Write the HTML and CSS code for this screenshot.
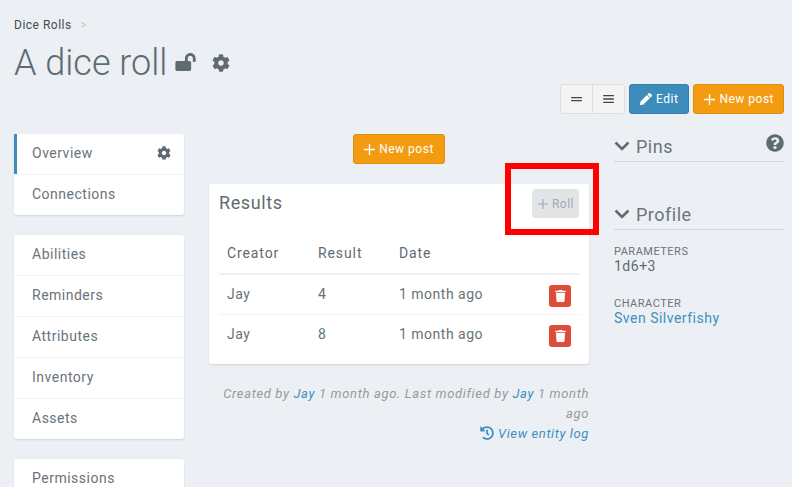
FILE: index.html
```html
<!DOCTYPE html>
<html lang="en">
<head>
    <meta charset="UTF-8">
    <title>A dice roll</title>
    <link rel="stylesheet" href="styles.css">
</head>
<body>
    <svg class="sprites" width="0" height="0">
        <symbol id="i-cog" viewBox="0 0 512 512"><path d="M487.4 315.7l-42.6-24.6c4.3-23.2 4.3-47 0-70.2l42.6-24.6c4.9-2.8 7.1-8.6 5.5-14-11.1-35.6-30-67.8-54.7-94.6-3.8-4.1-10-5.1-14.8-2.3L380.8 110c-17.9-15.4-38.5-27.3-60.8-35.1V25.8c0-5.6-3.9-10.5-9.4-11.7-36.7-8.2-74.3-7.8-109.2 0-5.5 1.2-9.4 6.1-9.4 11.7V75c-22.2 7.9-42.8 19.8-60.8 35.1L88.7 85.5c-4.9-2.8-11-1.9-14.8 2.3-24.7 26.7-43.6 58.9-54.7 94.6-1.7 5.4.6 11.2 5.5 14L67.3 221c-4.3 23.2-4.3 47 0 70.2l-42.6 24.6c-4.9 2.8-7.1 8.6-5.5 14 11.1 35.6 30 67.8 54.7 94.6 3.8 4.1 10 5.1 14.8 2.3l42.6-24.6c17.9 15.4 38.5 27.3 60.8 35.1v49.2c0 5.6 3.9 10.5 9.4 11.7 36.7 8.2 74.3 7.8 109.2 0 5.5-1.2 9.4-6.1 9.4-11.7v-49.2c22.2-7.9 42.8-19.8 60.8-35.1l42.6 24.6c4.9 2.8 11 1.9 14.8-2.3 24.7-26.7 43.6-58.9 54.7-94.6 1.5-5.5-.7-11.3-5.6-14.1zM256 336c-44.1 0-80-35.9-80-80s35.9-80 80-80 80 35.9 80 80-35.9 80-80 80z"/></symbol>
        <symbol id="i-plus" viewBox="0 0 12 12"><path d="M5.3 0h1.4v5.300H12v1.400H6.700V12H5.300V6.700H0V5.300h5.300z"/></symbol>
        <symbol id="i-chevron" viewBox="0 0 16 10"><path d="M1.5 1.5 8 8l6.5-6.5" fill="none" stroke="currentColor" stroke-width="2.6"/></symbol>
        <symbol id="i-trash" viewBox="0 0 448 512"><path d="M432 32H312l-9.4-18.7A24 24 0 0 0 281.1 0H166.8a23.72 23.72 0 0 0-21.4 13.3L136 32H16A16 16 0 0 0 0 48v32a16 16 0 0 0 16 16h416a16 16 0 0 0 16-16V48a16 16 0 0 0-16-16zM53.2 467a48 48 0 0 0 47.9 45h245.8a48 48 0 0 0 47.9-45L416 128H32z"/></symbol>
    </svg>

    <div class="breadcrumb">Dice Rolls <span class="sep">&gt;</span></div>
    <div class="title-row">
        <h1>A dice roll</h1>
        <svg class="icon-unlock" viewBox="0 0 576 512"><path d="M423.5 0C339.5.3 272 69.5 272 153.5V224H48c-26.5 0-48 21.5-48 48v192c0 26.5 21.5 48 48 48h352c26.5 0 48-21.5 48-48V272c0-26.5-21.5-48-48-48h-48v-71.1c0-39.6 31.7-72.5 71.3-72.9 40-.4 72.7 32.1 72.7 72v80c0 13.3 10.7 24 24 24h32c13.3 0 24-10.7 24-24v-80C576 68 507.5-.3 423.5 0z"/></svg>
        <svg class="icon-title-cog"><use href="#i-cog"/></svg>
    </div>

    <div class="actions">
        <div class="btn-group">
            <button class="btn btn-light"><svg class="icon-bars" viewBox="0 0 16 12"><path d="M0 3h16v2H0zM0 7.500h16v2H0z"/></svg></button>
            <button class="btn btn-light"><svg class="icon-bars" viewBox="0 0 16 12"><path d="M0 0h16v2H0zM0 5h16v2H0zM0 10h16v2H0z"/></svg></button>
        </div>
        <button class="btn btn-blue"><svg class="icon-btn icon-pencil" viewBox="0 0 512 512"><path d="M497.9 142.1l-46.1 46.1c-4.7 4.7-12.3 4.7-17 0l-111-111c-4.7-4.7-4.7-12.3 0-17l46.1-46.1c18.7-18.7 49.1-18.7 67.9 0l60.1 60.1c18.800 18.700 18.800 49.100 0 67.900zM284.200 99.800L21.600 362.400.4 483.900c-2.900 16.400 11.400 30.600 27.800 27.800l121.500-21.300 262.600-262.600c4.700-4.700 4.700-12.300 0-17l-111-111c-4.800-4.700-12.400-4.700-17.100 0z"/></svg>Edit</button>
        <button class="btn btn-orange"><svg class="icon-btn"><use href="#i-plus"/></svg>New post</button>
    </div>

    <div class="layout">
        <nav class="sidebar">
            <ul class="menu">
                <li class="active">Overview<svg class="icon-menu-cog"><use href="#i-cog"/></svg></li>
                <li>Connections</li>
            </ul>
            <ul class="menu">
                <li>Abilities</li>
                <li>Reminders</li>
                <li>Attributes</li>
                <li>Inventory</li>
                <li>Assets</li>
            </ul>
            <ul class="menu">
                <li>Permissions</li>
            </ul>
        </nav>

        <main class="content">
            <div class="content-actions">
                <button class="btn btn-orange"><svg class="icon-btn"><use href="#i-plus"/></svg>New post</button>
            </div>
            <section class="card">
                <div class="card-head">
                    <h3>Results</h3>
                    <button class="btn btn-disabled"><svg class="icon-btn"><use href="#i-plus"/></svg>Roll</button>
                </div>
                <table>
                    <thead>
                        <tr><th>Creator</th><th>Result</th><th>Date</th><th></th></tr>
                    </thead>
                    <tbody>
                        <tr><td>Jay</td><td>4</td><td>1 month ago</td><td class="cell-del"><span class="btn-del"><svg><use href="#i-trash"/></svg></span></td></tr>
                        <tr><td>Jay</td><td>8</td><td>1 month ago</td><td class="cell-del"><span class="btn-del"><svg><use href="#i-trash"/></svg></span></td></tr>
                    </tbody>
                </table>
            </section>
            <p class="meta">
                Created by <a href="#">Jay</a> 1 month ago. Last modified by <a href="#">Jay</a> 1 month ago<br>
                <a class="log-link" href="#"><svg class="icon-history" viewBox="0 0 512 512"><path d="M504 255.531c.253 136.64-111.18 248.372-247.82 248.468-59.015.042-113.223-20.53-155.822-54.911-11.077-8.94-11.905-25.541-1.839-35.607l11.267-11.267c8.609-8.609 22.353-9.551 31.891-1.984C173.062 425.135 212.781 440 256 440c101.705 0 184-82.311 184-184 0-101.705-82.311-184-184-184-48.814 0-93.149 18.969-126.068 49.932l50.754 50.754c10.08 10.08 2.941 27.314-11.313 27.314H24c-8.837 0-16-7.163-16-16V38.627c0-14.254 17.234-21.393 27.314-11.314l49.372 49.372C129.209 34.136 189.552 8 256 8c136.81 0 247.747 110.78 248 247.531zm-180.912 78.784l9.823-12.63c8.138-10.463 6.253-25.542-4.21-33.679L288 256.349V152c0-13.255-10.745-24-24-24h-16c-13.255 0-24 10.745-24 24v135.651l65.409 50.874c10.463 8.137 25.541 6.253 33.679-4.21z"/></svg>View entity log</a>
            </p>
        </main>

        <aside class="side">
            <div class="side-head">
                <svg class="icon-chevron"><use href="#i-chevron"/></svg>Pins
                <svg class="icon-help" viewBox="0 0 512 512"><path d="M504 256c0 136.997-111.043 248-248 248S8 392.997 8 256C8 119.083 119.043 8 256 8s248 111.083 248 248zM262.655 90c-54.497 0-89.255 22.957-116.549 63.758-3.536 5.286-2.353 12.415 2.715 16.258l34.699 26.31c5.205 3.947 12.621 3.008 16.665-2.122 17.864-22.658 30.113-35.797 57.303-35.797 20.429 0 45.698 13.148 45.698 32.958 0 14.976-12.363 22.667-32.534 33.976C247.128 238.528 216 254.941 216 296v4c0 6.627 5.373 12 12 12h56c6.627 0 12-5.373 12-12v-1.333c0-28.462 83.186-29.647 83.186-106.667 0-58.002-60.165-102-116.531-102zM256 338c-25.365 0-46 20.635-46 46 0 25.364 20.635 46 46 46s46-20.636 46-46c0-25.365-20.635-46-46-46z"/></svg>
            </div>
            <div class="side-head profile-head">
                <svg class="icon-chevron"><use href="#i-chevron"/></svg>Profile
            </div>
            <div class="field">
                <div class="field-label">Parameters</div>
                <div class="field-value">1d6+3</div>
            </div>
            <div class="field">
                <div class="field-label">Character</div>
                <div class="field-value"><a href="#">Sven Silverfishy</a></div>
            </div>
        </aside>
    </div>

    <div class="highlight"></div>
</body>
</html>
```

FILE: styles.css
```css
html {
    overflow: hidden;
}
body {
    margin: 0;
    padding: 17px 8px 0 14px;
    background: #ecf0f4;
    color: #5f6b73;
    font-family: Roboto, "Liberation Sans", sans-serif;
    font-size: 14px;
    letter-spacing: 0.5px;
}
a {
    color: #3d8fc0;
    text-decoration: none;
}
.sprites {
    position: absolute;
}
.breadcrumb {
    height: 16px;
    font-size: 12px;
    line-height: 16px;
    color: #444b50;
}
.breadcrumb .sep {
    margin-left: 5px;
    color: #c2c6ca;
}
.title-row {
    display: flex;
    align-items: center;
    height: 40px;
    margin-top: 9px;
}
h1 {
    margin: 2px 0 0;
    font-size: 36px;
    font-weight: 300;
    letter-spacing: 0;
    line-height: 40px;
    color: #5f6b70;
}
.icon-unlock {
    width: 21px;
    height: 18px;
    margin-left: 8px;
    fill: #5f6b70;
}
.icon-title-cog {
    width: 18px;
    height: 18px;
    margin: 1px 0 0 16px;
    fill: #5f6b70;
}
.actions {
    display: flex;
    justify-content: flex-end;
    gap: 4px;
    margin-top: 2px;
}
.btn {
    display: inline-flex;
    align-items: center;
    justify-content: center;
    height: 30px;
    padding: 0 10px;
    border: 1px solid transparent;
    border-radius: 3px;
    font: inherit;
    font-size: 12px;
    letter-spacing: 0.5px;
    color: #fff;
}
.btn-group {
    display: flex;
}
.btn-light {
    width: 33px;
    padding: 0;
    background: #f4f4f4;
    border-color: #ddd;
    border-radius: 3px 0 0 3px;
}
.btn-light + .btn-light {
    margin-left: -1px;
    border-radius: 0 3px 3px 0;
}
.btn-blue {
    background: #3c8dbc;
    border-color: #367fa9;
}
.btn-orange {
    padding: 0 9px 0 10px;
    background: #f39c12;
    border-color: #e08e0b;
}
.content-actions .btn-orange {
    padding: 0 10px;
}
.btn-disabled {
    height: 29px;
    padding: 0 4px 0 5px;
    background: #e3e4e6;
    border-color: #e3e4e6;
    color: #a0a8ba;
}
.icon-bars {
    width: 11px;
    height: 8px;
    fill: #444;
}
.icon-btn {
    width: 11px;
    height: 11px;
    margin-right: 4px;
    fill: currentColor;
}
.icon-pencil {
    width: 12px;
    height: 12px;
}
.btn-disabled .icon-btn {
    width: 10px;
    height: 10px;
}
.layout {
    display: grid;
    grid-template-columns: 170px 380px 170px;
    gap: 25px;
    margin-top: 20px;
}
.menu {
    margin: 0 0 20px;
    padding: 0;
    list-style: none;
    background: #fff;
    border-radius: 3px;
    box-shadow: 0 1px 2px rgba(0, 0, 0, 0.12);
}
.menu li {
    display: flex;
    align-items: center;
    justify-content: space-between;
    height: 38px;
    padding: 0 13px 2px 18px;
    border-top: 1px solid #f2f3f5;
    color: #69737b;
}
.menu li:first-child {
    border-top: 0;
}
.menu li.active {
    border-left: 3px solid #3c8dbc;
    padding-left: 15px;
}
.icon-menu-cog {
    width: 14px;
    height: 14px;
    fill: #5f6b70;
}
.content-actions {
    display: flex;
    justify-content: center;
    margin-bottom: 20px;
}
.card {
    height: 180px;
    padding: 5px 10px 0;
    box-sizing: border-box;
    background: #fff;
    border-radius: 3px;
    box-shadow: 0 1px 2px rgba(0, 0, 0, 0.12);
}
.card-head {
    display: flex;
    justify-content: space-between;
    height: 44px;
}
.card-head h3 {
    margin: 3px 0 0;
    font-size: 18px;
    font-weight: 400;
    letter-spacing: 0.6px;
    line-height: 22px;
    color: #5f6b70;
}
table {
    width: 100%;
    border-collapse: collapse;
}
th {
    height: 40px;
    padding: 0 8px;
    border-bottom: 2px solid #f0f0f0;
    font-weight: 400;
    letter-spacing: 0.9px;
    text-align: left;
    color: #5f6b70;
}
td {
    height: 37px;
    padding: 0 8px 2px;
    border-top: 1px solid #f2f2f2;
    color: #697377;
}
th:nth-child(1) {
    width: 75px;
}
th:nth-child(2) {
    width: 65px;
}
.cell-del {
    padding: 0;
    text-align: right;
}
.btn-del {
    display: inline-flex;
    align-items: center;
    justify-content: center;
    width: 22px;
    height: 22px;
    margin: 2px 8px 0 0;
    background: #dd4b39;
    border-radius: 3px;
}
.btn-del svg {
    width: 11px;
    height: 12px;
    fill: #fff;
}
.meta {
    margin: 20px 0 0;
    font-size: 13px;
    font-style: italic;
    letter-spacing: 0.65px;
    line-height: 20px;
    text-align: right;
    color: #999;
}
.log-link {
    letter-spacing: 0.6px;
}
.icon-history {
    width: 14px;
    height: 14px;
    margin-right: 4px;
    vertical-align: -2px;
    fill: currentColor;
}
.side-head {
    position: relative;
    display: flex;
    align-items: center;
    height: 24px;
    padding-bottom: 3px;
    border-bottom: 1px solid #d2d6de;
    font-size: 18px;
    color: #6b757b;
}
.profile-head {
    margin-top: 40px;
}
.icon-chevron {
    width: 16px;
    height: 10px;
    margin-right: 6px;
    color: #5f6b70;
}
.icon-help {
    position: absolute;
    top: 0;
    right: 0;
    width: 18px;
    height: 18px;
    fill: #5f6b70;
}
.field {
    margin-top: 23px;
}
.profile-head + .field {
    margin-top: 15px;
}
.field-label {
    font-size: 11px;
    line-height: 14px;
    text-transform: uppercase;
    color: #69737b;
}
.field-value {
    line-height: 15px;
    color: #5f6b70;
}
.highlight {
    position: absolute;
    left: 505px;
    top: 163px;
    width: 94px;
    height: 72px;
    box-sizing: border-box;
    border: 6px solid #f00;
}
```
